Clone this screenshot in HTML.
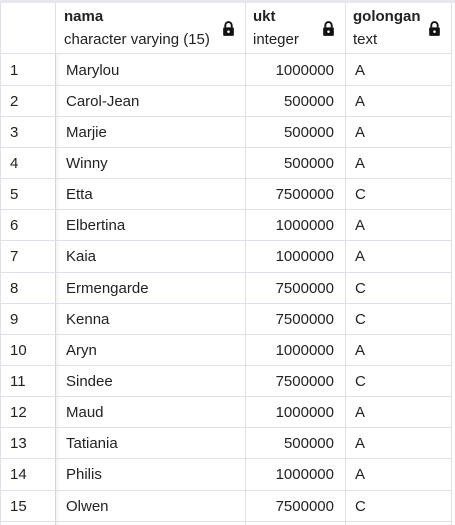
<!DOCTYPE html>
<html><head><style>
body{margin:0;width:455px;height:525px;overflow:hidden;background:#fff;font-family:"Liberation Sans",sans-serif;font-size:15px;color:#222;position:relative}
.top{position:absolute;left:0;top:0;width:455px;height:3px;background:#e6e8ee}
.v{position:absolute;top:3px;bottom:0;width:1px;background:#dde0e6}
.h{position:absolute;left:0;width:452px;height:1px;background:#dde0e6}
.t{position:absolute;white-space:nowrap;line-height:16px}
.b{font-weight:bold}
.lock{position:absolute;width:13px;height:16px}
.shadow{position:absolute;left:55px;top:53px;width:6px;bottom:0;background:linear-gradient(90deg,rgba(0,0,0,0.06),rgba(0,0,0,0))}
</style></head><body>
<div class="top"></div>
<div class="v" style="left:0"></div>
<div class="v" style="left:55px"></div>
<div class="v" style="left:245px"></div>
<div class="v" style="left:345px"></div>
<div class="v" style="left:451px"></div>
<div class="shadow"></div>
<div class="t b" style="left:64px;top:9px">nama</div>
<div class="t" style="left:64px;top:32px">character varying (15)</div>
<div class="t b" style="left:253px;top:9px">ukt</div>
<div class="t" style="left:253px;top:32px">integer</div>
<div class="t b" style="left:353px;top:9px">golongan</div>
<div class="t" style="left:353px;top:32px">text</div>
<svg class="lock" style="left:222px;top:21px" viewBox="0 0 12 15"><path d="M3 6V4a3 3 0 0 1 6 0v2" fill="none" stroke="#111" stroke-width="1.8"/><rect x="1" y="6" width="10" height="8" rx="1" fill="#111"/><circle cx="6" cy="10" r="1.2" fill="#fff"/></svg>
<svg class="lock" style="left:322px;top:21px" viewBox="0 0 12 15"><path d="M3 6V4a3 3 0 0 1 6 0v2" fill="none" stroke="#111" stroke-width="1.8"/><rect x="1" y="6" width="10" height="8" rx="1" fill="#111"/><circle cx="6" cy="10" r="1.2" fill="#fff"/></svg>
<svg class="lock" style="left:428px;top:21px" viewBox="0 0 12 15"><path d="M3 6V4a3 3 0 0 1 6 0v2" fill="none" stroke="#111" stroke-width="1.8"/><rect x="1" y="6" width="10" height="8" rx="1" fill="#111"/><circle cx="6" cy="10" r="1.2" fill="#fff"/></svg>
<div id="rows"></div>
<script>
var d=[["Marylou",1000000,"A"],["Carol-Jean",500000,"A"],["Marjie",500000,"A"],["Winny",500000,"A"],["Etta",7500000,"C"],["Elbertina",1000000,"A"],["Kaia",1000000,"A"],["Ermengarde",7500000,"C"],["Kenna",7500000,"C"],["Aryn",1000000,"A"],["Sindee",7500000,"C"],["Maud",1000000,"A"],["Tatiania",500000,"A"],["Philis",1000000,"A"],["Olwen",7500000,"C"]];
var h='<div class="h" style="top:53px"></div>';
for(var i=0;i<15;i++){var c=69+i*31.15,y=c-6.5;
h+='<div class="t" style="left:10px;top:'+y+'px">'+(i+1)+'</div>';
h+='<div class="t" style="left:66px;top:'+y+'px">'+d[i][0]+'</div>';
h+='<div class="t" style="right:121px;top:'+y+'px">'+d[i][1]+'</div>';
h+='<div class="t" style="left:355px;top:'+y+'px">'+d[i][2]+'</div>';
h+='<div class="h" style="top:'+(53.5+(i+1)*31.15).toFixed(1)+'px"></div>';}
document.getElementById('rows').innerHTML=h;
</script>
</body></html>
